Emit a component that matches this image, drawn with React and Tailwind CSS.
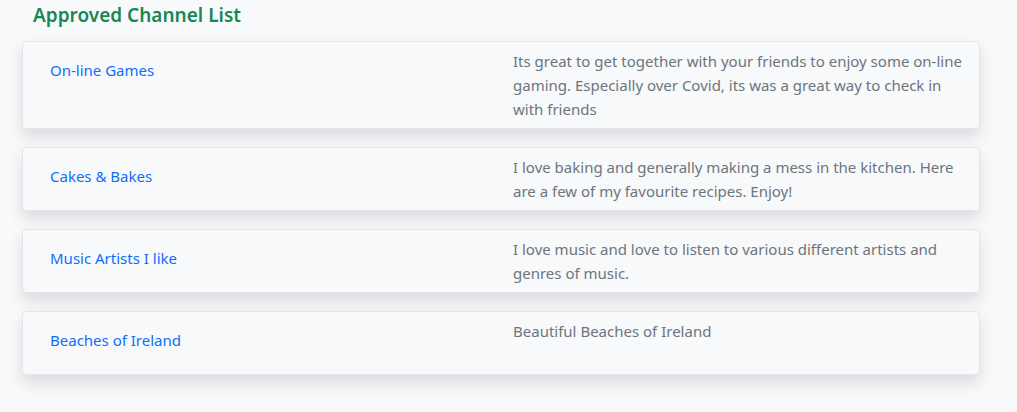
const channels = [
  {
    name: "On-line Games",
    description:
      "Its great to get together with your friends to enjoy some on-line gaming. Especially over Covid, its was a great way to check in with friends",
  },
  {
    name: "Cakes & Bakes",
    description:
      "I love baking and generally making a mess in the kitchen. Here are a few of my favourite recipes. Enjoy!",
  },
  {
    name: "Music Artists I like",
    description:
      "I love music and love to listen to various different artists and genres of music.",
  },
  {
    name: "Beaches of Ireland",
    description: "Beautiful Beaches of Ireland",
  },
];

const ChannelCard = ({ channel }) => (
  <div className="grid min-h-[64px] grid-cols-[463px_1fr] rounded border border-[#e3e5e8] bg-[#f8f9fa] py-[7px] pl-[27px] pr-[12px] text-[15px] leading-6 shadow-[0_8px_16px_rgba(0,0,0,0.12)]">
    {/* Channel name */}
    <div className="pt-[9px] pb-2">
      <a href="#" className="text-[#0d6efd]">
        {channel.name}
      </a>
    </div>

    {/* Description */}
    <p className="text-[#6c757d]">{channel.description}</p>
  </div>
);

export default function App() {
  return (
    <div
      className="min-h-[412px] bg-[#f8f9fa] pl-[22px] pr-[37px] pb-8"
      style={{ fontFamily: '"Noto Sans", "Open Sans", sans-serif' }}
    >
      <h2 className="pl-[11px] pt-[2px] pb-[13px] text-[19px] font-semibold leading-[26px] text-[#198754]">
        Approved Channel List
      </h2>

      <div className="flex flex-col gap-[18px]">
        {channels.map((c) => (
          <ChannelCard key={c.name} channel={c} />
        ))}
      </div>
    </div>
  );
}
